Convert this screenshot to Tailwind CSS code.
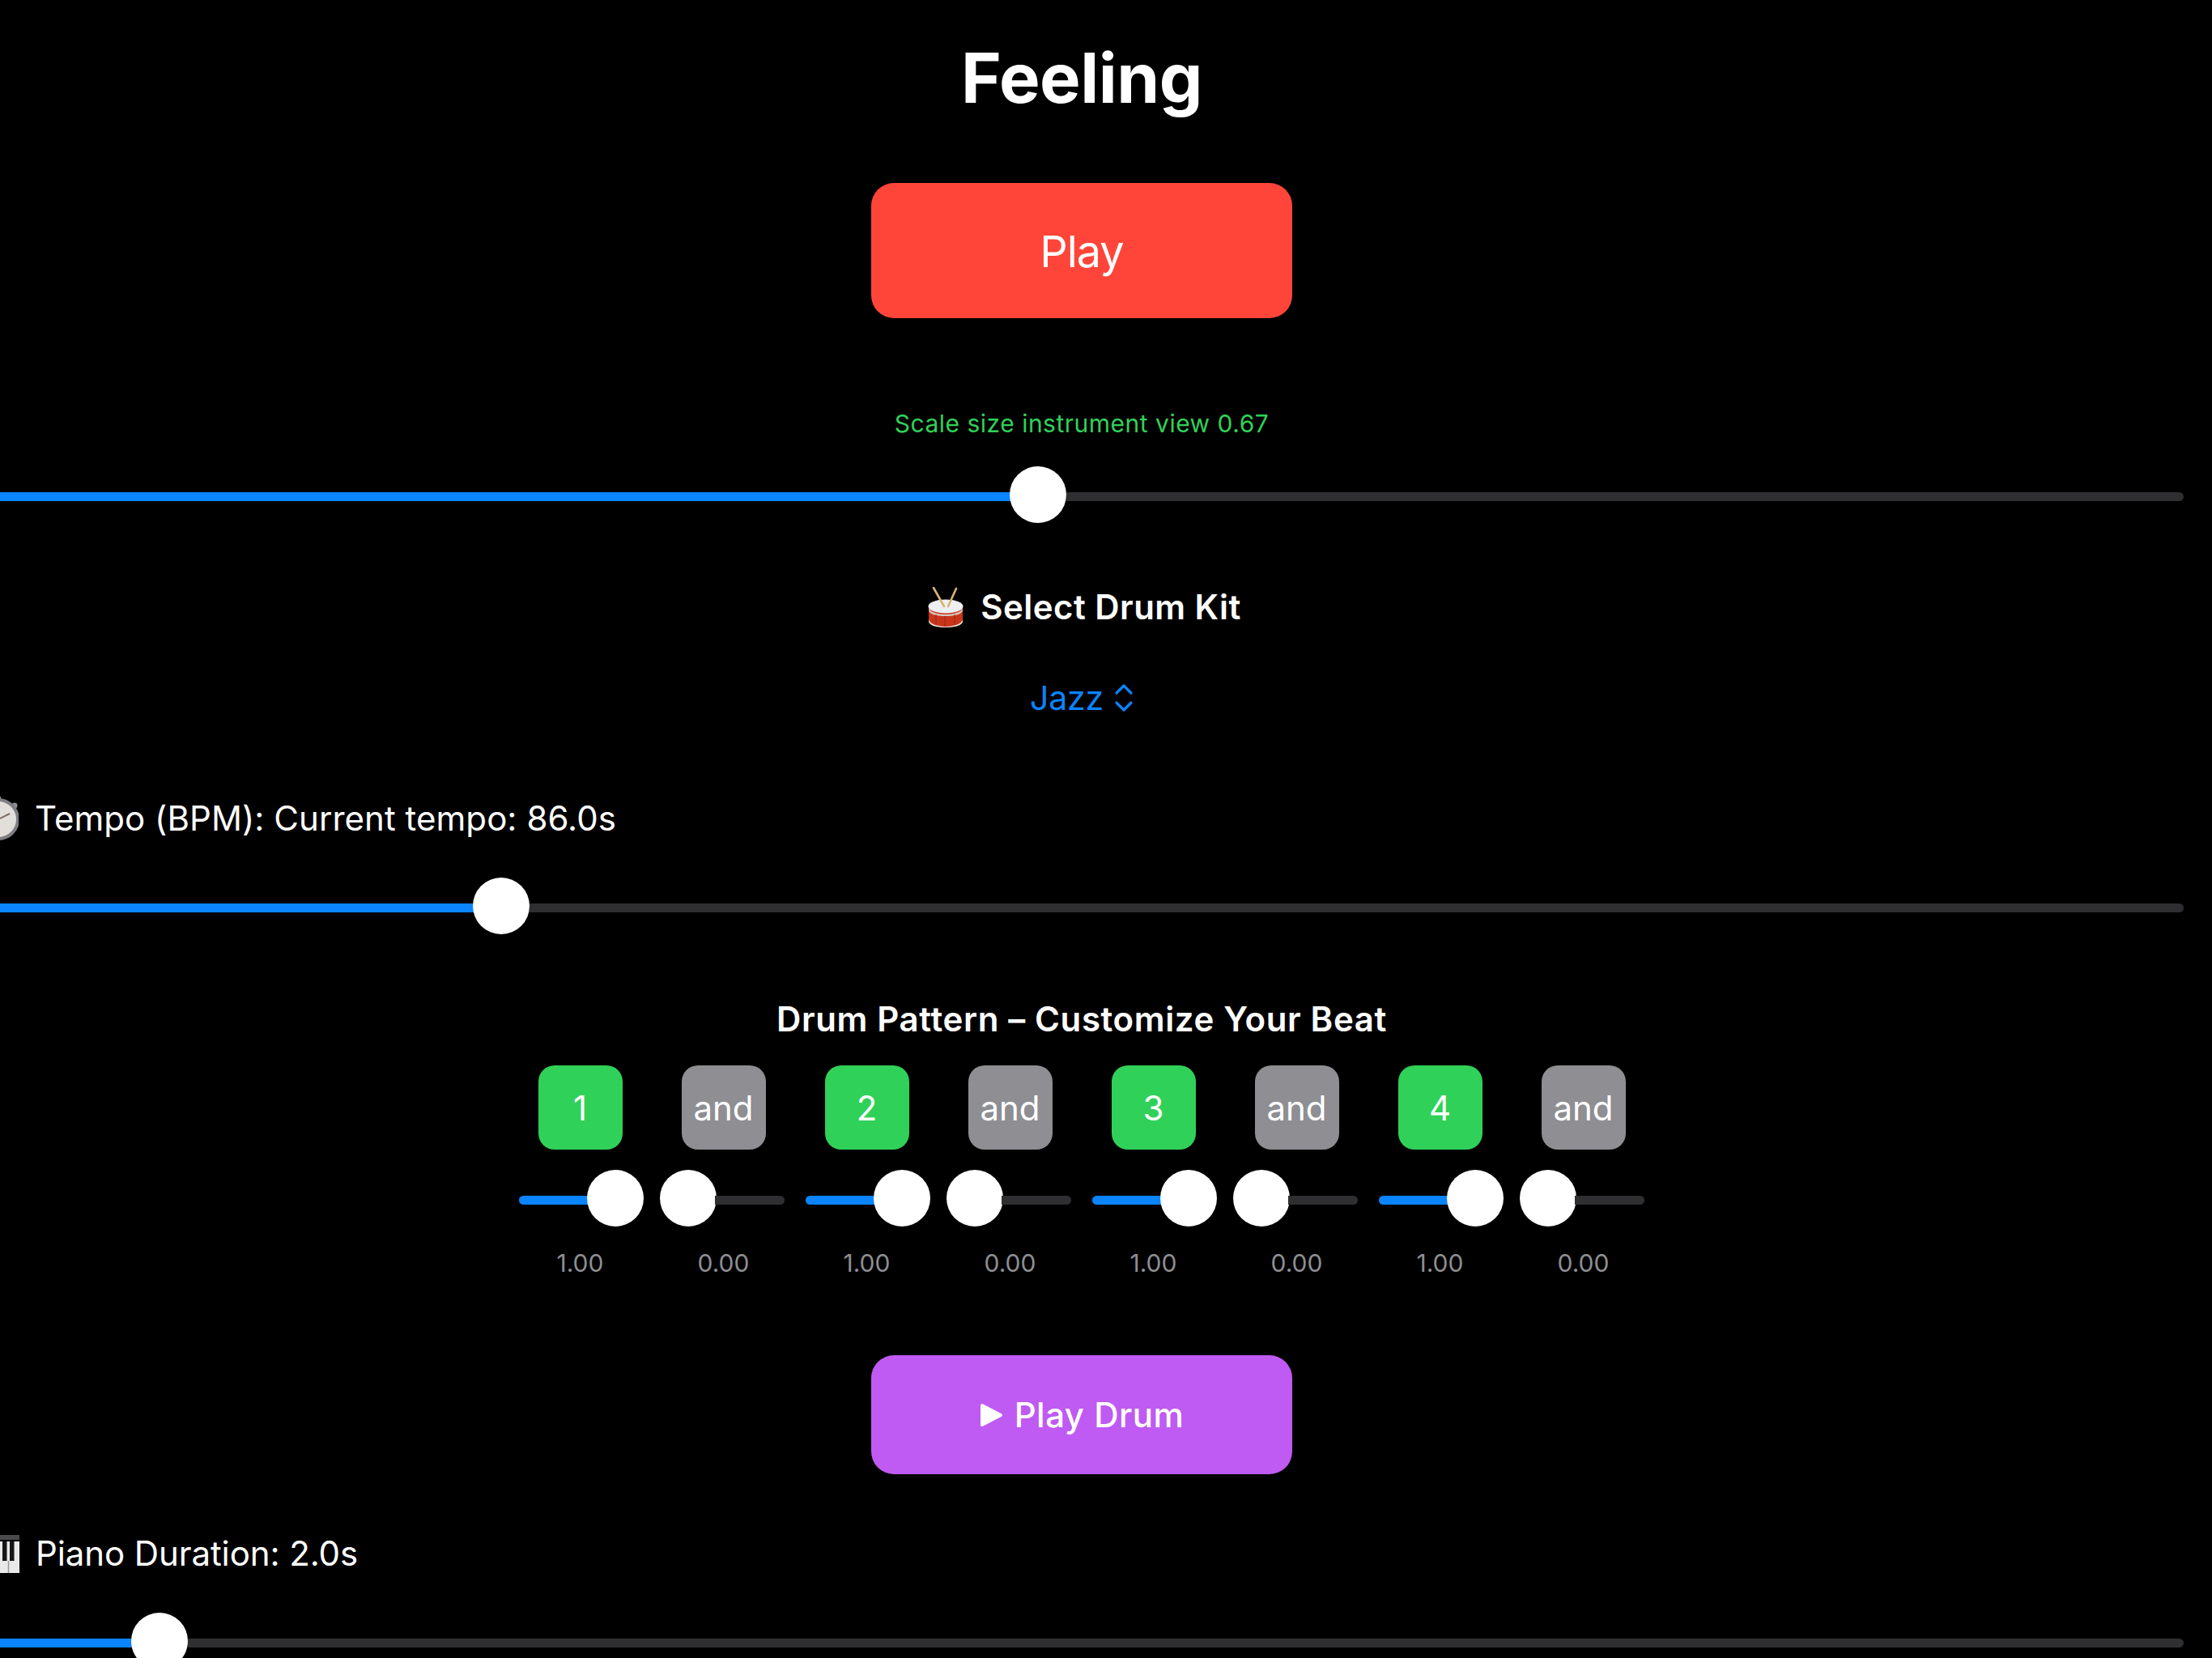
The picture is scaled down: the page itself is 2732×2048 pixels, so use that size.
<!DOCTYPE html>
<html lang="en">
<head>
<meta charset="utf-8">
<title>Feeling</title>
<script src="https://cdn.jsdelivr.net/npm/@tailwindcss/browser@4"></script>
</head>
<body class="bg-black">
<div class="w-[2732px] h-[2048px] overflow-hidden bg-black text-white [font-family:Inter,sans-serif]">
<main class="w-[2722px] -ml-[25px] flex flex-col items-center">

  <h1 class="mt-[47px] text-[85px] leading-[100px] font-bold tracking-[-0.5px]">Feeling</h1>

  <button class="mt-[79px] w-[520px] h-[167px] pt-[3px] rounded-[28px] bg-[#FF453A] text-[54px] leading-none font-normal tracking-[-1px]">Play</button>

  <p class="mt-[112px] text-[30px] leading-[36px] tracking-[0.5px] text-[#30D158]">Scale size instrument view 0.67</p>

  <div class="mt-[35px] w-full h-[75px] flex items-center">
    <div class="w-[1274px] h-[11px] rounded-l-full bg-[#0A84FF]"></div>
    <div class="shrink-0 w-[70px] h-[70px] -ml-[2px] mb-[5px] rounded-full bg-white"></div>
    <div class="flex-1 h-[11px] rounded-r-full bg-[#2F2F32]"></div>
  </div>

  <div class="mt-[74px] h-[50px] flex items-center gap-[21px]">
    <svg class="ml-[7px] w-[44px] h-[50px] shrink-0" viewBox="0 0 44 50">
      <path d="M1 25 V41 Q2 49 22 50 Q42 49 43 41 V25 Z" fill="#C9351B"/>
      <path d="M1 40 Q3 48 22 49 Q41 48 43 40 V43 Q41 50 22 50 Q3 50 1 43 Z" fill="#E8DCD0"/>
      <ellipse cx="22" cy="24" rx="21.5" ry="8.5" fill="#EDEFF2"/>
      <path d="M1 26 Q3 33 22 34 Q41 33 43 26 V29 Q41 36 22 36 Q3 36 1 29 Z" fill="#D8C8BC"/>
      <path d="M10 34 V47 M33 34 V47 M21 36 V49" stroke="#8E2A16" stroke-width="1"/>
      <path d="M7 1 L20 24" stroke="#D9B46E" stroke-width="2.6" stroke-linecap="round"/>
      <path d="M35 2 L25 24" stroke="#D9B46E" stroke-width="2.6" stroke-linecap="round"/>
    </svg>
    <h2 class="text-[42px] leading-[50px] font-semibold tracking-[0.45px]">Select Drum Kit</h2>
  </div>

  <button class="mt-[62px] h-[50px] flex items-center gap-[13px] text-[41px] leading-[50px] tracking-[-0.2px] text-[#0A84FF]">
    <span>Jazz</span>
    <svg class="w-[24px] h-[36px]" viewBox="0 0 24 36" fill="none" stroke="#0A84FF" stroke-width="3.2" stroke-linecap="round" stroke-linejoin="round">
      <path d="M3 12 L12 3 L21 12"/>
      <path d="M3 24 L12 33 L21 24"/>
    </svg>
  </button>

  <div class="mt-[99px] self-start h-[50px] -ml-[6px] flex items-center gap-[20px]">
    <svg class="w-[54px] h-[54px] shrink-0" viewBox="0 0 54 54">
      <rect x="26" y="0" width="6" height="5" fill="#9A9A9E"/>
      <circle cx="49" cy="11" r="3.5" fill="#8E8E92"/>
      <circle cx="29" cy="28" r="26" fill="#7E7E84"/>
      <circle cx="29" cy="28" r="22" fill="#E2DFDB"/>
      <path d="M29 28 L43 21" stroke="#7D6E66" stroke-width="2"/>
      <path d="M29 28 L26 44" stroke="#B8B0A8" stroke-width="1.5"/>
    </svg>
    <span class="text-[42px] leading-[50px] tracking-[0.05px]">Tempo (BPM): Current tempo: 86.0s</span>
  </div>

  <div class="mt-[48px] w-full h-[75px] flex items-center">
    <div class="w-[611px] h-[11px] rounded-l-full bg-[#0A84FF]"></div>
    <div class="shrink-0 w-[70px] h-[70px] -ml-[2px] mb-[5px] rounded-full bg-white"></div>
    <div class="flex-1 h-[11px] rounded-r-full bg-[#2F2F32]"></div>
  </div>

  <h2 class="mt-[75px] text-[42px] leading-[50px] font-semibold tracking-[0.62px]">Drum Pattern – Customize Your Beat</h2>

  <div class="mt-[32px] grid grid-cols-[repeat(8,177px)]">
    <div class="flex flex-col items-center">
      <button class="w-[104px] h-[104px] rounded-[20px] bg-[#30D158] text-[42px]">1</button>
      <div class="mt-[25px] ml-[3px] w-[154px] h-[75px] flex items-center">
        <div class="flex-1 h-[11px] rounded-l-full bg-[#0A84FF]"></div>
        <div class="shrink-0 w-[70px] h-[70px] -ml-[2px] mb-[5px] rounded-full bg-white"></div>
      </div>
      <p class="mt-[22px] text-[30px] leading-[36px] text-[#8E8E93]">1.00</p>
    </div>
    <div class="flex flex-col items-center">
      <button class="w-[104px] h-[104px] rounded-[20px] bg-[#8E8E93] text-[42px]">and</button>
      <div class="mt-[25px] mr-[3px] w-[154px] h-[75px] flex items-center">
        <div class="shrink-0 w-[70px] h-[70px] -mr-[2px] mb-[5px] rounded-full bg-white"></div>
        <div class="flex-1 h-[11px] rounded-r-full bg-[#2F2F32]"></div>
      </div>
      <p class="mt-[22px] text-[30px] leading-[36px] text-[#8E8E93]">0.00</p>
    </div>
    <div class="flex flex-col items-center">
      <button class="w-[104px] h-[104px] rounded-[20px] bg-[#30D158] text-[42px]">2</button>
      <div class="mt-[25px] ml-[3px] w-[154px] h-[75px] flex items-center">
        <div class="flex-1 h-[11px] rounded-l-full bg-[#0A84FF]"></div>
        <div class="shrink-0 w-[70px] h-[70px] -ml-[2px] mb-[5px] rounded-full bg-white"></div>
      </div>
      <p class="mt-[22px] text-[30px] leading-[36px] text-[#8E8E93]">1.00</p>
    </div>
    <div class="flex flex-col items-center">
      <button class="w-[104px] h-[104px] rounded-[20px] bg-[#8E8E93] text-[42px]">and</button>
      <div class="mt-[25px] mr-[3px] w-[154px] h-[75px] flex items-center">
        <div class="shrink-0 w-[70px] h-[70px] -mr-[2px] mb-[5px] rounded-full bg-white"></div>
        <div class="flex-1 h-[11px] rounded-r-full bg-[#2F2F32]"></div>
      </div>
      <p class="mt-[22px] text-[30px] leading-[36px] text-[#8E8E93]">0.00</p>
    </div>
    <div class="flex flex-col items-center">
      <button class="w-[104px] h-[104px] rounded-[20px] bg-[#30D158] text-[42px]">3</button>
      <div class="mt-[25px] ml-[3px] w-[154px] h-[75px] flex items-center">
        <div class="flex-1 h-[11px] rounded-l-full bg-[#0A84FF]"></div>
        <div class="shrink-0 w-[70px] h-[70px] -ml-[2px] mb-[5px] rounded-full bg-white"></div>
      </div>
      <p class="mt-[22px] text-[30px] leading-[36px] text-[#8E8E93]">1.00</p>
    </div>
    <div class="flex flex-col items-center">
      <button class="w-[104px] h-[104px] rounded-[20px] bg-[#8E8E93] text-[42px]">and</button>
      <div class="mt-[25px] mr-[3px] w-[154px] h-[75px] flex items-center">
        <div class="shrink-0 w-[70px] h-[70px] -mr-[2px] mb-[5px] rounded-full bg-white"></div>
        <div class="flex-1 h-[11px] rounded-r-full bg-[#2F2F32]"></div>
      </div>
      <p class="mt-[22px] text-[30px] leading-[36px] text-[#8E8E93]">0.00</p>
    </div>
    <div class="flex flex-col items-center">
      <button class="w-[104px] h-[104px] rounded-[20px] bg-[#30D158] text-[42px]">4</button>
      <div class="mt-[25px] ml-[3px] w-[154px] h-[75px] flex items-center">
        <div class="flex-1 h-[11px] rounded-l-full bg-[#0A84FF]"></div>
        <div class="shrink-0 w-[70px] h-[70px] -ml-[2px] mb-[5px] rounded-full bg-white"></div>
      </div>
      <p class="mt-[22px] text-[30px] leading-[36px] text-[#8E8E93]">1.00</p>
    </div>
    <div class="flex flex-col items-center">
      <button class="w-[104px] h-[104px] rounded-[20px] bg-[#8E8E93] text-[42px]">and</button>
      <div class="mt-[25px] mr-[3px] w-[154px] h-[75px] flex items-center">
        <div class="shrink-0 w-[70px] h-[70px] -mr-[2px] mb-[5px] rounded-full bg-white"></div>
        <div class="flex-1 h-[11px] rounded-r-full bg-[#2F2F32]"></div>
      </div>
      <p class="mt-[22px] text-[30px] leading-[36px] text-[#8E8E93]">0.00</p>
    </div>
  </div>

  <button class="mt-[96px] w-[520px] h-[147px] rounded-[28px] bg-[#BF5AF2] flex items-center justify-center gap-[14px] text-[42px] font-medium tracking-[0.5px]">
    <svg class="w-[29px] h-[30px] shrink-0" viewBox="0 0 29 30"><path d="M3 3 L26 15 L3 27 Z" fill="#fff" stroke="#fff" stroke-width="4" stroke-linejoin="round"/></svg>
    <span>Play Drum</span>
  </button>

  <div class="mt-[73px] self-start h-[50px] flex items-center gap-[20px]">
    <svg class="w-[49px] h-[47px] shrink-0" viewBox="0 0 49 47">
      <rect x="0" y="0" width="49" height="6" fill="#4A4A4C"/>
      <rect x="0" y="8" width="49" height="39" fill="#E9E9E9"/>
      <rect x="28" y="8" width="5.5" height="24" fill="#161616"/>
      <rect x="37" y="8" width="5.5" height="24" fill="#161616"/>
      <path d="M35.5 32 V47" stroke="#9A9A9A" stroke-width="1.5"/>
    </svg>
    <span class="text-[42px] leading-[50px] tracking-[-0.1px]">Piano Duration: 2.0s</span>
  </div>

  <div class="mt-[48px] w-full h-[75px] flex items-center">
    <div class="w-[189px] h-[11px] rounded-l-full bg-[#0A84FF]"></div>
    <div class="shrink-0 w-[70px] h-[70px] -ml-[2px] mb-[5px] rounded-full bg-white"></div>
    <div class="flex-1 h-[11px] rounded-r-full bg-[#2F2F32]"></div>
  </div>

</main>
</div>
</body>
</html>
